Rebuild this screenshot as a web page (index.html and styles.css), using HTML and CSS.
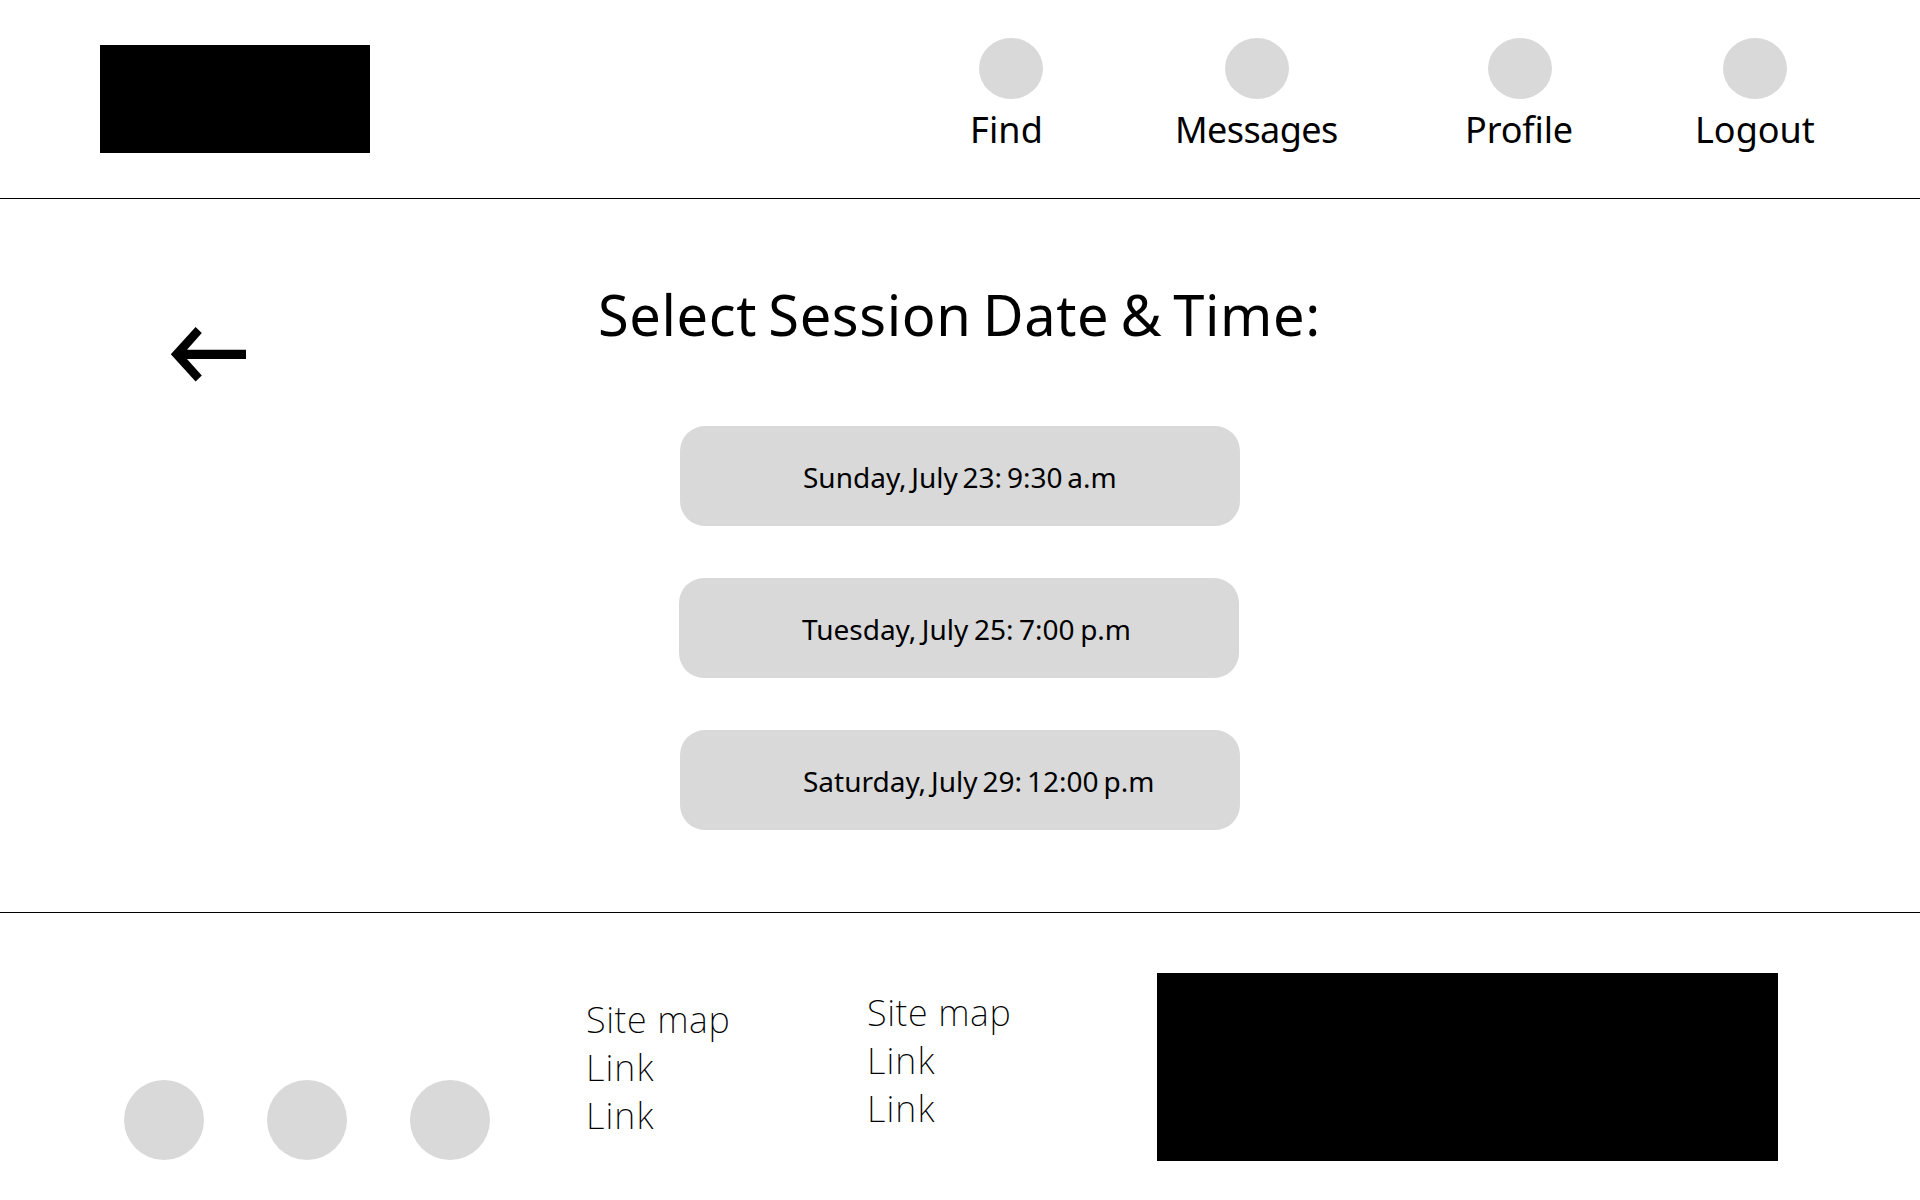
FILE: index.html
```html
<!DOCTYPE html>
<html lang="en">
<head>
<meta charset="utf-8">
<title>Select Session</title>
<link rel="stylesheet" href="styles.css">
</head>
<body>
<header class="header">
  <div class="logo"></div>
  <nav class="nav">
    <a class="nav-item find"><span class="nav-icon"></span><span class="label">Find</span></a>
    <a class="nav-item messages"><span class="nav-icon"></span><span class="label">Messages</span></a>
    <a class="nav-item profile"><span class="nav-icon"></span><span class="label">Profile</span></a>
    <a class="nav-item logout"><span class="nav-icon"></span><span class="label">Logout</span></a>
  </nav>
</header>
<main class="main">
  <a class="back">
    <svg width="76" height="56" viewBox="0 0 76 56"><path d="M0.8 28.3 25.6 1 31.8 7 17 23.8H76v9.2H17L31.8 49.4 25.6 55.6Z"/></svg>
  </a>
  <section class="picker">
    <h1 class="title">Select Session Date &amp; Time:</h1>
    <div class="slots">
      <button class="slot sunday">Sunday, July 23: 9:30 a.m</button>
      <button class="slot tuesday">Tuesday, July 25: 7:00 p.m</button>
      <button class="slot saturday">Saturday, July 29: 12:00 p.m</button>
    </div>
  </section>
</main>
<footer class="footer">
  <div class="social"><span class="dot"></span><span class="dot"></span><span class="dot"></span></div>
  <ul class="links first"><li class="heading">Site map</li><li>Link</li><li>Link</li></ul>
  <ul class="links second"><li class="heading">Site map</li><li>Link</li><li>Link</li></ul>
  <div class="banner"></div>
</footer>
</body>
</html>
```
FILE: styles.css
```css
* { box-sizing: border-box; }
body {
  margin: 0;
  width: 1920px;
  height: 1200px;
  display: flex;
  flex-direction: column;
  overflow: hidden;
  background: #fff;
  color: #000;
  font-family: "Noto Sans", "Open Sans", sans-serif;
}
.header {
  height: 199px;
  display: flex;
  border-bottom: 1px solid #000;
}
.logo {
  width: 270px;
  height: 108px;
  margin: 45px 598px 0 100px;
  background: #000;
}
.nav {
  display: grid;
  grid-template-columns: 205px 290px 230px 200px;
  padding-top: 38px;
}
.nav-item {
  display: flex;
  flex-direction: column;
  gap: 7px;
  font-size: 36px;
  line-height: 48px;
  white-space: nowrap;
}
.nav-icon {
  width: 64px;
  height: 61px;
  border-radius: 50%;
  background: #d9d9d9;
}
.label { padding-left: 2px; }
.find .nav-icon { margin-left: 11px; }
.messages .nav-icon { margin-left: 52px; }
.profile .nav-icon { margin-left: 25px; }
.logout .nav-icon { margin-left: 30px; }
.find { letter-spacing: 0.2px; }
.messages { letter-spacing: -0.6px; }
.profile { letter-spacing: -0.15px; }
.logout { letter-spacing: 0; }

.main {
  height: 713px;
  display: flex;
}
.back {
  width: 76px;
  margin: 127px 352px 0 170px;
}
.back svg { display: block; }
.title {
  margin: 77px 0 74px;
  font-size: 56px;
  line-height: 76px;
  font-weight: 400;
  letter-spacing: 0.6px;
  word-spacing: -3.9px;
  white-space: nowrap;
}
.slots {
  display: flex;
  flex-direction: column;
  gap: 52px;
  margin-left: 82px;
}
.slot {
  width: 560px;
  height: 100px;
  padding: 2px 0 0 123px;
  border: 0;
  border-radius: 25px;
  background: #d9d9d9;
  color: #000;
  font: 28px/38px "Noto Sans", "Open Sans", sans-serif;
  text-align: left;
  white-space: nowrap;
}
.sunday { word-spacing: -2.5px; }
.tuesday { margin-left: -1px; word-spacing: -1.7px; }
.saturday { word-spacing: -2.3px; }

.footer {
  height: 288px;
  display: flex;
  border-top: 1px solid #000;
}
.social {
  display: flex;
  gap: 63px;
  margin: 167px 96px 0 124px;
}
.dot {
  width: 80px;
  height: 80px;
  border-radius: 50%;
  background: #d9d9d9;
}
.links {
  margin: 0;
  padding: 0;
  list-style: none;
  font-size: 36px;
  line-height: 48px;
  font-weight: 200;
  letter-spacing: 1.1px;
  white-space: nowrap;
}
.links .heading { letter-spacing: 0.6px; }
.first { width: 281px; margin-top: 83px; }
.second { width: 290px; margin-top: 76px; }
.banner {
  width: 621px;
  height: 188px;
  margin-top: 60px;
  background: #000;
}
```
